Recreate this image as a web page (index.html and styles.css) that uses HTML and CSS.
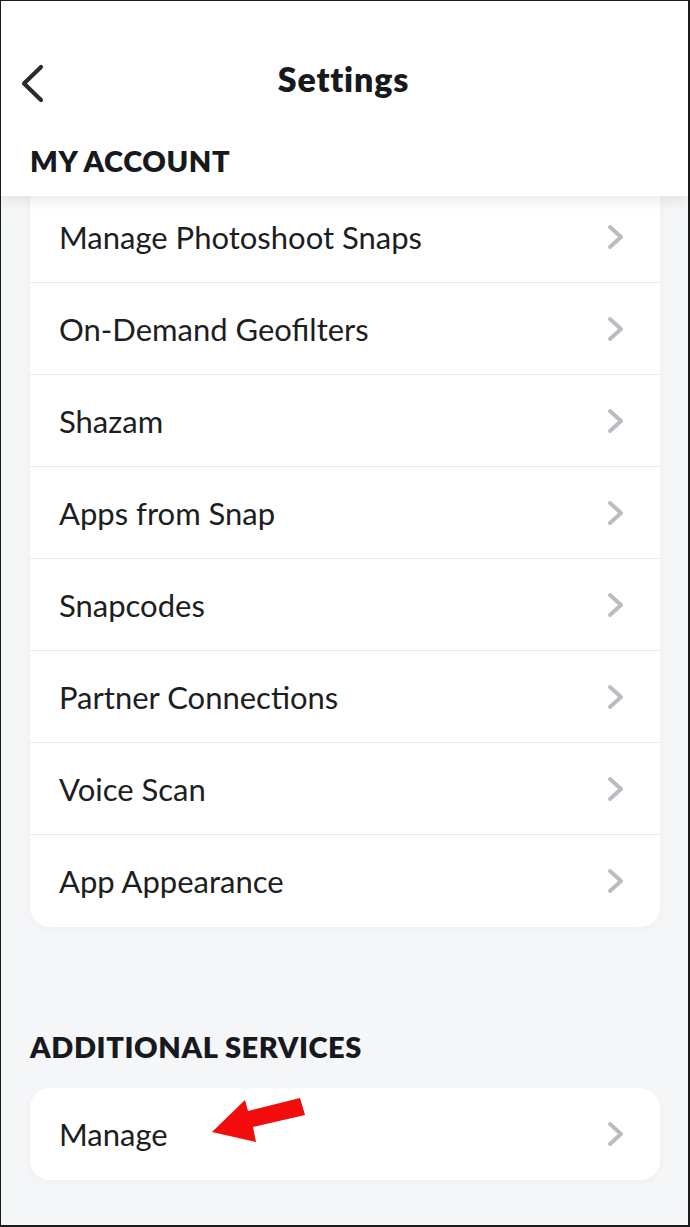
FILE: index.html
```html
<!DOCTYPE html>
<html lang="en">
<head>
<meta charset="utf-8">
<title>Settings</title>
<link rel="stylesheet" href="styles.css">
</head>
<body>
<div class="frame">
  <header class="topbar">
    <div class="nav">
      <button class="back" aria-label="Back">
        <svg width="28" height="40" viewBox="0 0 28 40"><path d="M22 4 L5 20.5 L22 37" fill="none" stroke="#2b2b2b" stroke-width="4.2" stroke-linecap="round" stroke-linejoin="round"/></svg>
      </button>
      <h1 class="title">Settings</h1>
    </div>
    <h2 class="section-title">MY ACCOUNT</h2>
  </header>
  <main class="content">
    <div class="card card-scrolled">
      <div class="row first"><span>Manage Photoshoot Snaps</span><svg class="chev" width="18" height="26" viewBox="0 0 18 26"><path d="M3 3 L14 13 L3 23" fill="none" stroke="#b9bcc1" stroke-width="4" stroke-linecap="round" stroke-linejoin="round"/></svg></div>
      <div class="row"><span>On-Demand Geofilters</span><svg class="chev" width="18" height="26" viewBox="0 0 18 26"><path d="M3 3 L14 13 L3 23" fill="none" stroke="#b9bcc1" stroke-width="4" stroke-linecap="round" stroke-linejoin="round"/></svg></div>
      <div class="row"><span>Shazam</span><svg class="chev" width="18" height="26" viewBox="0 0 18 26"><path d="M3 3 L14 13 L3 23" fill="none" stroke="#b9bcc1" stroke-width="4" stroke-linecap="round" stroke-linejoin="round"/></svg></div>
      <div class="row"><span>Apps from Snap</span><svg class="chev" width="18" height="26" viewBox="0 0 18 26"><path d="M3 3 L14 13 L3 23" fill="none" stroke="#b9bcc1" stroke-width="4" stroke-linecap="round" stroke-linejoin="round"/></svg></div>
      <div class="row"><span>Snapcodes</span><svg class="chev" width="18" height="26" viewBox="0 0 18 26"><path d="M3 3 L14 13 L3 23" fill="none" stroke="#b9bcc1" stroke-width="4" stroke-linecap="round" stroke-linejoin="round"/></svg></div>
      <div class="row"><span>Partner Connections</span><svg class="chev" width="18" height="26" viewBox="0 0 18 26"><path d="M3 3 L14 13 L3 23" fill="none" stroke="#b9bcc1" stroke-width="4" stroke-linecap="round" stroke-linejoin="round"/></svg></div>
      <div class="row"><span>Voice Scan</span><svg class="chev" width="18" height="26" viewBox="0 0 18 26"><path d="M3 3 L14 13 L3 23" fill="none" stroke="#b9bcc1" stroke-width="4" stroke-linecap="round" stroke-linejoin="round"/></svg></div>
      <div class="row last"><span>App Appearance</span><svg class="chev" width="18" height="26" viewBox="0 0 18 26"><path d="M3 3 L14 13 L3 23" fill="none" stroke="#b9bcc1" stroke-width="4" stroke-linecap="round" stroke-linejoin="round"/></svg></div>
    </div>

    <h2 class="section-title additional">ADDITIONAL SERVICES</h2>

    <div class="card manage-card">
      <div class="row last"><span>Manage</span><svg class="chev" width="18" height="26" viewBox="0 0 18 26"><path d="M3 3 L14 13 L3 23" fill="none" stroke="#b9bcc1" stroke-width="4" stroke-linecap="round" stroke-linejoin="round"/></svg></div>
      <svg class="arrow" width="290" height="60" viewBox="0 0 290 60"><polygon points="270,10 275,27 223,39 226,54 182,44 215,12 218,23" fill="#f20c0c"/></svg>
    </div>
  </main>
</div>
</body>
</html>
```

FILE: styles.css
```css
* { box-sizing: border-box; }

html, body {
  margin: 0;
  padding: 0;
}

body {
  font-family: Lato, "Noto Sans", "Liberation Sans", sans-serif;
  color: #1c1e21;
  background: #f5f6f8;
}

.frame {
  width: 690px;
  height: 1227px;
  border-style: solid;
  border-color: #1b1b1b;
  border-width: 1px 2px 2px 1px;
  background: #f5f6f8;
  display: flex;
  flex-direction: column;
  overflow: hidden;
}

.topbar {
  position: relative;
  z-index: 2;
  height: 195px;
  background: #ffffff;
  box-shadow: 0 3px 14px rgba(0, 0, 0, 0.10);
  display: flex;
  flex-direction: column;
  flex-shrink: 0;
}

.nav {
  position: relative;
  height: 142px;
  padding-top: 58px;
  padding-right: 2px;
  display: flex;
  justify-content: center;
}

.back {
  position: absolute;
  left: 18px;
  top: 62px;
  width: 28px;
  height: 40px;
  padding: 0;
  border: 0;
  background: none;
  display: block;
}

.back svg { display: block; }

.title {
  margin: 0;
  font-size: 34px;
  font-weight: 800;
  line-height: 40px;
  color: #17191c;
  letter-spacing: 0.8px;
}

.section-title {
  margin: 0;
  padding-left: 29px;
  font-size: 29px;
  font-weight: 800;
  line-height: 36px;
  color: #17191c;
  letter-spacing: 0.6px;
}

.content {
  padding: 0 28px 0 29px;
  display: flex;
  flex-direction: column;
}

.card {
  background: #ffffff;
  border-radius: 20px;
  box-shadow: 0 2px 10px rgba(0, 0, 0, 0.03);
}

.card-scrolled {
  margin-top: -5px;
  border-top-left-radius: 0;
  border-top-right-radius: 0;
}

.row {
  height: 92px;
  padding: 0 35px 0 29px;
  display: flex;
  align-items: center;
  justify-content: space-between;
  border-bottom: 1px solid #e9eaec;
  font-size: 31px;
  font-weight: 400;
  letter-spacing: 0;
  color: #1c1e21;
}

.row.last { border-bottom: 0; }

.chev { display: block; flex-shrink: 0; }

.additional {
  margin-top: 102px;
  padding-left: 0;
}

.manage-card {
  position: relative;
  margin-top: 23px;
}

.arrow {
  position: absolute;
  left: 0;
  top: 0;
  pointer-events: none;
}
```
